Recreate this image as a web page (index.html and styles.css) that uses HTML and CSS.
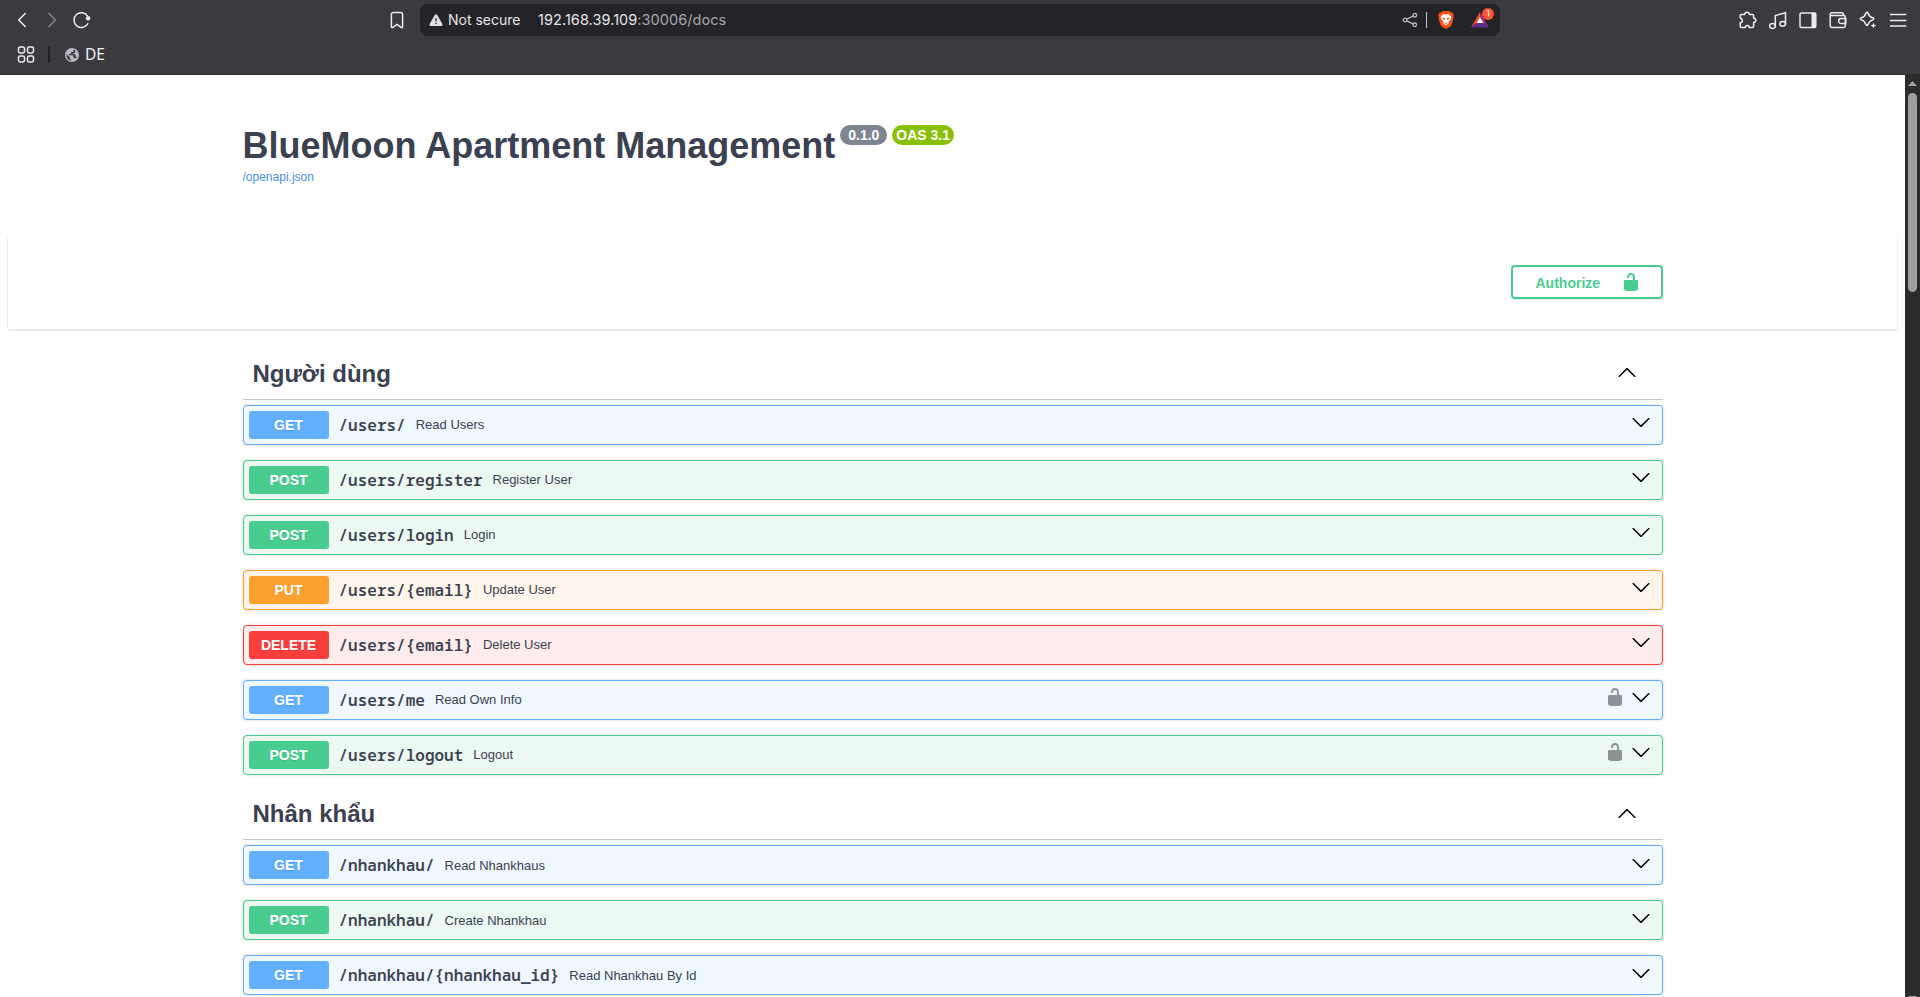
FILE: index.html
```html
<!DOCTYPE html>
<html lang="en">
<head>
<meta charset="utf-8">
<title>BlueMoon Apartment Management</title>
<link rel="stylesheet" href="styles.css">
</head>
<body>
<svg class="defs" aria-hidden="true">
  <symbol id="arrow-up" viewBox="0 0 20 20"><path d="M17.418 14.908c.272.268.709.268.979 0s.271-.701 0-.969l-7.908-7.83c-.27-.268-.707-.268-.979 0l-7.908 7.83c-.27.268-.27.701 0 .969.271.268.709.268.979 0L10 7.767z"/></symbol>
  <symbol id="arrow-down" viewBox="0 0 20 20"><path d="M17.418 6.109c.272-.268.709-.268.979 0s.271.701 0 .969l-7.908 7.83c-.27.268-.707.268-.979 0l-7.908-7.83c-.27-.268-.27-.701 0-.969.271-.268.709-.268.979 0L10 13.25z"/></symbol>
  <symbol id="unlocked" viewBox="0 0 20 20"><path d="M15.8 8H14V5.6C14 2.703 12.665 1 10 1 7.334 1 6 2.703 6 5.6V6h2v-.801C8 3.754 8.797 3 10 3c1.203 0 2 .754 2 2.199V8H4c-.553 0-1 .646-1 1.199V17c0 .549.428 1.139.951 1.307l1.197.387C5.672 18.861 6.55 19 7.1 19h5.8c.549 0 1.428-.139 1.951-.307l1.196-.387c.524-.167.953-.757.953-1.306V9.199C17 8.646 16.352 8 15.8 8z"/></symbol>
</svg>

<header class="chrome">
  <div class="toolbar">
    <div class="nav">
      <svg class="ico" viewBox="0 0 24 24"><path d="M15.7 5 8.800 12l6.900 7"/></svg>
      <svg class="ico dim" viewBox="0 0 24 24"><path d="M8.500 5l6.900 7-6.900 7"/></svg>
      <svg class="ico" viewBox="0 0 24 24"><path d="M17.800 8.400a7.400 7.400 0 1 0 .3 6.800"/><circle class="solid" cx="18.100" cy="10.200" r="2.200"/></svg>
    </div>
    <svg class="ico bookmark" viewBox="0 0 24 24"><path d="M6.400 18.800V6.200a1.700 1.700 0 0 1 1.700-1.700h7.800a1.700 1.700 0 0 1 1.700 1.700v12.600c0 .8-.8 1.100-1.400.6L12 16.400l-4.200 3c-.6.5-1.400.2-1.400-.6z"/></svg>
    <div class="address">
      <svg class="warn" viewBox="0 0 14 14"><path fill="#dfdfe6" d="M7 1.200c.5 0 .9.300 1.200.8l5.200 9c.5.900-.1 1.900-1.100 1.900H1.700c-1 0-1.600-1-1.100-1.900L5.800 2c.3-.5.7-.8 1.200-.8z"/><path fill="#242428" d="M6.400 5h1.200v3.600H6.400zm0 4.700h1.200v1.300H6.400z"/></svg>
      <span class="insecure">Not secure</span>
      <span class="url">192.168.39.109<span class="url-rest">:30006/docs</span></span>
      <svg class="share" viewBox="0 0 16 16"><g fill="none" stroke="#b9b9be" stroke-width="1.300"><circle cx="3" cy="8" r="1.800"/><circle cx="12.800" cy="3.200" r="1.800"/><circle cx="12.800" cy="12.800" r="1.800"/><path d="M4.700 7.200l6.400-3.100M4.700 8.800l6.400 3.100"/></g></svg>
      <span class="bar-sep"></span>
      <svg class="brave" viewBox="0 0 16 18"><path fill="#ff5011" d="M4.800 0h6.400l1.600 1.500 1.500.1L15.700 4l-.5 1.500.4 1.300-2 7-1.300 1.800L8 18l-4.300-2.400-1.300-1.800-2-7 .4-1.300L.3 4l1.400-2.400 1.500-.1z"/><path fill="#fff" d="M5.200 3L8 3.500l2.800-.5L13.400 6l-1 3-1.800 1.500.3 1.800L8 14.500l-2.900-2.200.3-1.800L3.600 9l-1-3z"/><path fill="#ff5011" d="M4.200 6.600l2.500.4.400.5-.3 1.300-1.700-.6zM11.800 6.600L9.300 7l-.4.500.3 1.300 1.700-.6zM6.300 11.300l1.700.8 1.700-.8-.4 1-1.300.7-1.300-.7z"/></svg>
      <span class="rewards">
        <svg class="bat" viewBox="0 0 18 16"><path fill="#ff4b23" d="M9 0v5L5.500 11 0 15.500z"/><path fill="#9e2a7f" d="M9 0l9 15.500-5.500-4.500L9 5z"/><path fill="#5b2a91" d="M0 15.500L5.500 11h7l5.500 4.500z"/><path fill="#fff" d="M9 5l3.500 6h-7z"/></svg>
        <span class="rewards-count">1</span>
      </span>
    </div>
    <div class="actions">
      <svg class="ico" viewBox="0 0 24 24"><path d="M5.300 6.500h3.300C8.800 5 9.900 4.300 11 4.300s2.200.7 2.400 2.200h3.100c.7 0 1.100.4 1.100 1.100V10c1.500.2 2.200 1.100 2.200 2.200s-.7 2.100-2.200 2.400v3.700c0 .7-.4 1.100-1.100 1.100h-3.200c-.1-1.300-1-1.900-2-1.900s-1.900.6-2 1.900H5.500c-.7 0-1.300-.4-1.300-1.200v-3.400c1.500-.2 2.200-1 2.200-2.100S5.700 10.300 4.200 10V7.600c0-.7.4-1.100 1.100-1.100z"/></svg>
      <svg class="ico" viewBox="0 0 24 24"><ellipse cx="6.500" cy="18" rx="2.800" ry="2.400"/><ellipse cx="16.700" cy="15.800" rx="2.800" ry="2.400"/><path d="M9.300 18V7.500l10.200-2.800v11.100"/></svg>
      <svg class="ico" viewBox="0 0 24 24"><rect x="4" y="5" width="15.800" height="14.500" rx="1.300"/><path class="solid" d="M15.500 5h4v14.500h-4z"/></svg>
      <svg class="ico" viewBox="0 0 24 24"><path d="M4.200 6.500v11.300c0 .9.600 1.600 1.600 1.600h11.900c1 0 1.600-.7 1.600-1.600V8.900c0-.9-.7-1.500-1.600-1.500H5.500c-.8 0-1.300-.5-1.300-1.200 0-.9.600-1.500 1.500-1.500h10.200c.9 0 1.500.6 1.500 1.500v1.200M19.800 10.600h-4.700a2.400 2.400 0 0 0 0 4.900h4.700z"/></svg>
      <svg class="ico" viewBox="0 0 24 24"><path d="M11 4.300c.6 0 .9.300 1.100.9.800 2.900 1.700 3.800 4.700 4.600 1.300.3 1.300 1.700 0 2.100-3 .9-3.900 1.800-4.700 4.700-.4 1.200-1.800 1.200-2.200 0-.8-2.900-1.700-3.800-4.600-4.700-1.200-.4-1.200-1.800 0-2.100 2.900-.8 3.800-1.700 4.600-4.600.2-.6.500-.9 1.100-.9z"/><path class="solid" d="M17.400 14.800l.8 2 2 .8-2 .8-.8 2-.8-2-2-.8 2-.8z"/></svg>
      <svg class="ico" viewBox="0 0 24 24"><path d="M4 6.500h16.300M4 12.500h16.300M4 18h16.300"/></svg>
    </div>
  </div>
  <div class="bookmarks">
    <svg class="ico" viewBox="0 0 24 24"><rect x="4.500" y="4" width="6" height="6" rx="1.700"/><rect x="13.500" y="4" width="6" height="6" rx="1.700"/><rect x="4.500" y="13" width="6" height="6" rx="1.700"/><rect x="13.500" y="13" width="6" height="6" rx="1.700"/></svg>
    <span class="bm-sep"></span>
    <svg class="globe" viewBox="0 0 14 14"><circle cx="7" cy="7" r="7" fill="#b9bbc4"/><path fill="#3b3a3f" d="M8.500 1.500v1.300c0 .7-.6 1.300-1.300 1.300H6v1.200c0 .4-.3.700-.7.700H4v1.200h3.600c.4 0 .7.300.7.700v1.800h.7c.6 0 1.200.4 1.300 1l1.300-1.300c-.6-.2-1-.7-1-1.300V7.500c0-.7-.5-1.200-1.200-1.200H8V5.200h1.200c.6 0 1-.4 1-1V2.400zM1.600 6.100l3.300 3.300v.7c0 .7.600 1.300 1.300 1.300v1.200A5.600 5.600 0 0 1 1.500 7z"/></svg>
    <span class="bm-label">DE</span>
  </div>
</header>

<div class="viewport">
  <main class="page">
    <section class="wrapper info">
      <h1 class="title">BlueMoon Apartment Management<span class="badges"><span class="badge">0.1.0</span><span class="badge badge-oas">OAS 3.1</span></span></h1>
      <a class="spec-link">/openapi.json</a>
    </section>

    <div class="schemes">
      <div class="wrapper schemes-inner">
        <button class="authorize"><span class="authorize-label">Authorize</span><svg class="glyph"><use href="#unlocked"/></svg></button>
      </div>
    </div>

    <div class="wrapper">
      <section class="tag-section">
        <h2 class="tag">Người dùng<svg class="glyph"><use href="#arrow-up"/></svg></h2>
        <div class="op get"><span class="method">GET</span><span class="path">/users/</span><span class="desc">Read Users</span><svg class="glyph"><use href="#arrow-down"/></svg></div>
        <div class="op post"><span class="method">POST</span><span class="path">/users/register</span><span class="desc">Register User</span><svg class="glyph"><use href="#arrow-down"/></svg></div>
        <div class="op post"><span class="method">POST</span><span class="path">/users/login</span><span class="desc">Login</span><svg class="glyph"><use href="#arrow-down"/></svg></div>
        <div class="op put"><span class="method">PUT</span><span class="path">/users/{email}</span><span class="desc">Update User</span><svg class="glyph"><use href="#arrow-down"/></svg></div>
        <div class="op delete"><span class="method">DELETE</span><span class="path">/users/{email}</span><span class="desc">Delete User</span><svg class="glyph"><use href="#arrow-down"/></svg></div>
        <div class="op get"><span class="method">GET</span><span class="path">/users/me</span><span class="desc">Read Own Info</span><svg class="glyph lock"><use href="#unlocked"/></svg><svg class="glyph"><use href="#arrow-down"/></svg></div>
        <div class="op post"><span class="method">POST</span><span class="path">/users/logout</span><span class="desc">Logout</span><svg class="glyph lock"><use href="#unlocked"/></svg><svg class="glyph"><use href="#arrow-down"/></svg></div>
      </section>
      <section class="tag-section lowered">
        <h2 class="tag">Nhân khẩu<svg class="glyph"><use href="#arrow-up"/></svg></h2>
        <div class="op get"><span class="method">GET</span><span class="path">/nhankhau/</span><span class="desc">Read Nhankhaus</span><svg class="glyph"><use href="#arrow-down"/></svg></div>
        <div class="op post"><span class="method">POST</span><span class="path">/nhankhau/</span><span class="desc">Create Nhankhau</span><svg class="glyph"><use href="#arrow-down"/></svg></div>
        <div class="op get"><span class="method">GET</span><span class="path">/nhankhau/{nhankhau_id}</span><span class="desc">Read Nhankhau By Id</span><svg class="glyph"><use href="#arrow-down"/></svg></div>
      </section>
    </div>
  </main>
  <div class="scrollbar">
    <svg class="scroll-arrow" viewBox="0 0 9 5"><path d="M4.500 0L9 5H0z"/></svg>
    <div class="thumb"></div>
    <svg class="scroll-arrow scroll-down" viewBox="0 0 9 5"><path d="M0 0h9L4.500 5z"/></svg>
  </div>
</div>
</body>
</html>
```
FILE: styles.css
```css
* { box-sizing: border-box; }

body {
  margin: 0;
  height: 997px;
  overflow: hidden;
  display: flex;
  flex-direction: column;
  font-family: "Liberation Sans", Arial, sans-serif;
  color: #3b4151;
  background: #fff;
}

.defs { position: absolute; width: 0; height: 0; }

/* Browser chrome */
.chrome {
  flex: none;
  height: 75px;
  background: #3b3a3f;
  border-bottom: 1px solid #2d2c31;
}

.toolbar { display: flex; align-items: center; height: 40px; padding: 0 10px; }
.nav, .actions { display: flex; gap: 6px; }
.actions { margin-left: auto; }

.ico {
  flex: none;
  width: 24px;
  height: 24px;
  fill: none;
  stroke: #ececf0;
  stroke-width: 1.5;
}
.ico .solid { fill: #ececf0; stroke: none; }
.ico.dim { stroke: #838286; }
.bookmark { margin: 0 11px 0 291px; }

.address {
  display: flex;
  align-items: center;
  width: 1080px;
  height: 32px;
  padding: 0 11px 0 9px;
  border-radius: 8px;
  background: #242428;
  font: 14px/20px Inter, sans-serif;
  color: #e3e3e8;
}
.warn { width: 14px; height: 14px; }
.insecure { width: 73px; margin-left: 5px; white-space: nowrap; }
.url { margin-left: 17px; font-size: 14.5px; letter-spacing: .06px; }
.url-rest { color: #a5a5aa; }
.share { width: 16px; height: 16px; margin-left: auto; }
.bar-sep { width: 1px; height: 16px; margin: 0 11px 0 8px; background: #c4c4c8; }
.brave { width: 16px; height: 18px; }
.rewards { position: relative; display: flex; margin-left: 17px; }
.bat { width: 18px; height: 16px; }
.rewards-count {
  position: absolute;
  top: -4px;
  left: 11px;
  width: 12px;
  height: 12px;
  border-radius: 50%;
  background: #ff5130;
  color: #fff;
  font-size: 9px;
  line-height: 12px;
  text-align: center;
}

.bookmarks { display: flex; align-items: center; height: 30px; padding-left: 14px; }
.bm-sep { width: 2px; height: 16px; margin: 0 15px 0 10px; background: #222126; }
.globe { width: 14px; height: 14px; }
.bm-label {
  margin: -2px 0 0 6px;
  font: 15.500px/20px "Noto Sans", sans-serif;
  color: #f0f0f2;
}

/* Page area */
.viewport { display: flex; flex: 1; min-height: 0; }
.page { flex: 1; overflow: hidden; background: #fff; }
.wrapper { width: 1460px; margin: 0 auto; padding: 0 20px; }

.info { height: 160px; padding-top: 50px; }
.title { display: flex; margin: 0; font-size: 36px; line-height: 41px; }
.badges { display: flex; gap: 5px; margin-left: 5px; }
.badge {
  height: 20px;
  padding: 0 8px;
  border-radius: 10px;
  background: #7d8492;
  color: #fff;
  font-size: 14px;
  line-height: 20px;
}
.badge-oas { padding: 0 4px; background: #89bf04; }
.spec-link { display: block; margin-top: 3px; font-size: 12px; line-height: 16px; color: #4990e2; }

.schemes {
  margin: 0 8px;
  padding: 30px 0;
  box-shadow: 0 1px 2px rgba(0, 0, 0, .15);
}
.schemes-inner { display: flex; justify-content: flex-end; }
.authorize {
  display: flex;
  align-items: center;
  justify-content: space-between;
  width: 152px;
  height: 34px;
  padding: 0 20px 0 23px;
  border: 2px solid #49cc90;
  border-radius: 4px;
  background: transparent;
  box-shadow: 0 1px 2px rgba(0, 0, 0, .1);
  font: bold 14px "Liberation Sans", Arial, sans-serif;
  color: #49cc90;
}
.authorize-label { padding-top: 2px; }
.glyph { flex: none; width: 20px; height: 20px; fill: #000; }
.authorize .glyph { fill: #49cc90; }

/* Operations */
.tag-section { --shift: 0px; }
.tag-section:first-child { padding-top: 21px; }
.lowered { --shift: 1px; }

.tag {
  display: flex;
  justify-content: space-between;
  height: 50px;
  margin: 0 0 5px;
  padding: 10px 26px 0 10px;
  border-bottom: 1px solid rgba(59, 65, 81, .3);
  font-size: 24px;
  line-height: 28px;
}
.tag .glyph { margin-top: calc(2px + var(--shift)); }

.op {
  display: flex;
  align-items: flex-start;
  height: 40px;
  margin-bottom: 15px;
  padding: 5px 11px 0 5px;
  border: 1px solid var(--c);
  border-radius: 4px;
  background: var(--bg);
  box-shadow: 0 0 3px rgba(0, 0, 0, .19);
}
.get { --c: #61affe; --bg: #eff7ff; }
.post { --c: #49cc90; --bg: #ebf9f2; }
.put { --c: #fca130; --bg: #fff5ea; }
.delete { --c: #f93e3e; --bg: #feebeb; }

.method {
  width: 80px;
  border-radius: 3px;
  background: var(--c);
  color: #fff;
  font-size: 14px;
  font-weight: bold;
  line-height: 28px;
  text-align: center;
  text-shadow: 0 1px 0 rgba(0, 0, 0, .1);
}
.path {
  margin-left: 10px;
  font-family: "Noto Sans Mono", "DejaVu Sans Mono", monospace;
  font-size: 16px;
  font-weight: 600;
  line-height: 28px;
}
.desc {
  flex: 1;
  margin: var(--shift) 0 0 10px;
  font-size: 13px;
  line-height: 28px;
}
.op .glyph { margin-top: calc(1px + var(--shift)); }
.op .lock { margin-right: 6px; opacity: .4; }

/* Page scrollbar */
.scrollbar {
  display: flex;
  flex-direction: column;
  align-items: center;
  width: 15px;
  padding-top: 6px;
  background: #2b2b2b;
}
.scroll-arrow { flex: none; width: 9px; height: 5px; fill: #9f9f9f; }
.thumb { flex: none; width: 9px; height: 199px; margin-top: 7px; border-radius: 5px; background: #9f9f9f; }
.scroll-down { margin-top: 704px; }
```
